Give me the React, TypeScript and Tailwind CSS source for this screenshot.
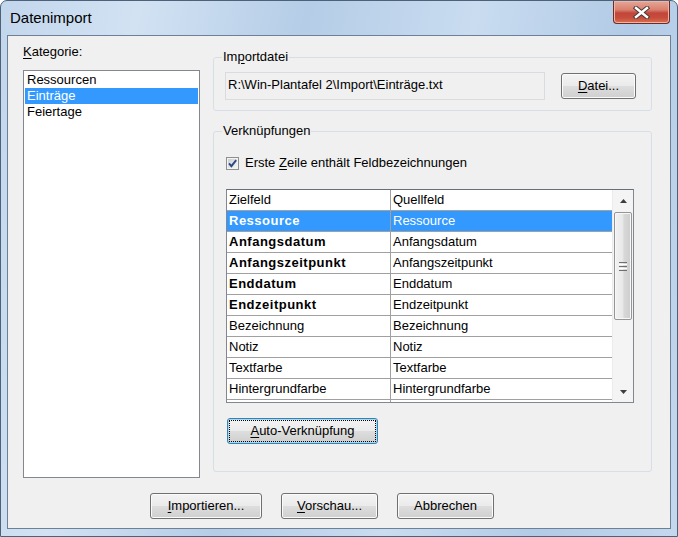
const rows = [
  { ziel: "Ressource", quelle: "Ressource", bold: true, selected: true },
  { ziel: "Anfangsdatum", quelle: "Anfangsdatum", bold: true },
  { ziel: "Anfangszeitpunkt", quelle: "Anfangszeitpunkt", bold: true },
  { ziel: "Enddatum", quelle: "Enddatum", bold: true },
  { ziel: "Endzeitpunkt", quelle: "Endzeitpunkt", bold: true },
  { ziel: "Bezeichnung", quelle: "Bezeichnung" },
  { ziel: "Notiz", quelle: "Notiz" },
  { ziel: "Textfarbe", quelle: "Textfarbe" },
  { ziel: "Hintergrundfarbe", quelle: "Hintergrundfarbe" },
  { ziel: "", quelle: "" },
];

const categories = ["Ressourcen", "Einträge", "Feiertage"];

function Button({
  children,
  className = "",
  focused = false,
}: {
  children: React.ReactNode;
  className?: string;
  focused?: boolean;
}) {
  return (
    <button
      type="button"
      className={
        "relative flex h-[26px] shrink-0 items-center justify-center rounded-[3px] border text-[13px] leading-[16px] text-black bg-[linear-gradient(180deg,#f3f3f3_0%,#ebebeb_48%,#dddddd_52%,#cfcfcf_100%)] " +
        (focused
          ? "border-[#3c7fb1] shadow-[inset_0_0_0_1px_#9edcf4] "
          : "border-[#707070] shadow-[inset_0_0_0_1px_#fbfbfb] ") +
        className
      }
    >
      {focused && <span className="absolute inset-[1px] border border-dotted border-black" />}
      <span className="relative">{children}</span>
    </button>
  );
}

function Mn({ children }: { children: React.ReactNode }) {
  return <span className="underline underline-offset-[2px]">{children}</span>;
}

function CheckBox() {
  return (
    <svg width="13" height="13" viewBox="0 0 13 13" className="shrink-0">
      <defs>
        <linearGradient id="cbg" x1="0" y1="0" x2="1" y2="1">
          <stop offset="0" stopColor="#cbcfd5" />
          <stop offset="1" stopColor="#f6f6f6" />
        </linearGradient>
      </defs>
      <rect x="0.5" y="0.5" width="12" height="12" fill="#f4f4f4" stroke="#8e8f8f" />
      <rect x="2" y="2" width="9" height="9" fill="url(#cbg)" />
      <path d="M3 6.3 L5.4 9.2 L10.2 3.2" stroke="#2b4b80" strokeWidth="1.9" fill="none" />
    </svg>
  );
}

function ScrollBar() {
  return (
    <div className="flex w-[21px] shrink-0 flex-col bg-[#f4f4f4] border-l border-[#ececec]">
      <div className="flex h-[22px] items-center justify-center">
        <svg width="7" height="4" viewBox="0 0 7 4">
          <polygon points="0,4 7,4 3.5,0" fill="#3d3d3d" />
        </svg>
      </div>
      <div className="mx-[1px] flex h-[108px] items-center justify-center rounded-[2px] border border-[#959595] bg-[linear-gradient(90deg,#f2f2f2_0%,#e8e8e8_50%,#d8d8d8_55%,#cdcdcd_100%)] shadow-[inset_0_0_0_1px_#f8f8f8]">
        <div className="flex flex-col gap-[1px]">
          <div className="h-[1px] w-[8px] bg-[#6f6f6f]" />
          <div className="h-[1px] w-[8px] bg-[#ffffff]" />
          <div className="h-[1px] w-[8px] bg-[#6f6f6f]" />
          <div className="h-[1px] w-[8px] bg-[#ffffff]" />
          <div className="h-[1px] w-[8px] bg-[#6f6f6f]" />
        </div>
      </div>
      <div className="flex-1" />
      <div className="flex h-[21px] items-center justify-center">
        <svg width="7" height="4" viewBox="0 0 7 4">
          <polygon points="0,0 7,0 3.5,4" fill="#3d3d3d" />
        </svg>
      </div>
    </div>
  );
}

export default function App() {
  return (
    <div className="flex h-[537px] w-[678px] flex-col overflow-hidden rounded-t-[7px] border border-[#4d6279] bg-[linear-gradient(100deg,#c2d6ec_0%,#d2e2f3_18%,#b5cde7_40%,#c9dcf0_62%,#b2cbe6_82%,#c4d8ee_100%)] font-['Liberation_Sans',Arial,sans-serif] text-black">
      {/* title bar */}
      <div className="flex h-[34px] shrink-0 items-start justify-between">
        <div className="pl-[9px] pt-[8px] text-[15px] leading-[18px]">Datenimport</div>
        <div className="mr-[7px] flex h-[23px] w-[57px] items-center justify-center rounded-b-[4px] border border-t-0 border-[#6e2c24] bg-[linear-gradient(180deg,#e7a698_0%,#d9806e_40%,#c2453a_55%,#c64c3c_75%,#d9704f_100%)] shadow-[inset_0_0_0_1px_#eeb4a6]">
          <svg width="17" height="13" viewBox="0 0 17 13">
            <path d="M3 2 L14 11 M14 2 L3 11" stroke="#4a3a38" strokeWidth="4.4" strokeLinecap="square" />
            <path d="M3 2 L14 11 M14 2 L3 11" stroke="#ffffff" strokeWidth="2.4" strokeLinecap="square" />
          </svg>
        </div>
      </div>

      {/* client area */}
      <div className="mx-[6px] flex h-[494px] shrink-0 flex-col border border-[#6e8096] bg-[#f0f0f0] text-[13px] leading-[16px]">
        <div className="flex pl-[15px]">
          {/* left column */}
          <div className="flex w-[177px] flex-col">
            <div className="mt-[8px]">
              <Mn>K</Mn>ategorie:
            </div>
            <div className="mt-[10px] flex h-[408px] flex-col border border-[#828790] bg-white px-[1px] pt-[1px]">
              {categories.map((c) => (
                <div
                  key={c}
                  className={
                    "h-[16px] pl-[2px] " + (c === "Einträge" ? "bg-[#3399ff] text-white" : "")
                  }
                >
                  {c}
                </div>
              ))}
            </div>
          </div>

          {/* right column */}
          <div className="ml-[13px] flex w-[439px] flex-col">
            <fieldset className="mt-[13px] w-[439px] rounded-[3px] border border-[#d5dfe5]">
              <legend className="ml-[8px] px-[1px]">
                Im<Mn>p</Mn>ortdatei
              </legend>
              <div className="flex items-start pl-[11px] pt-[7px] pb-[10px]">
                <div className="h-[28px] w-[320px] border border-[#dadbe0] pl-[2px] pt-[4px]">
                  R:\Win-Plantafel 2\Import\Einträge.txt
                </div>
                <Button className="ml-[16px] mt-[1px] w-[75px]">
                  <Mn>D</Mn>atei...
                </Button>
              </div>
            </fieldset>

            <fieldset className="mt-[12px] w-[439px] rounded-[3px] border border-[#d5dfe5]">
              <legend className="ml-[8px] px-[1px]">Verknüpfungen</legend>
              <div className="flex flex-col pl-[12px] pt-[16px] pb-[27px]">
                <div className="flex h-[16px] items-center gap-[6px]">
                  <CheckBox />
                  <span>
                    Erste <Mn>Z</Mn>eile enthält Feldbezeichnungen
                  </span>
                </div>

                <div className="mt-[18px] flex h-[214px] w-[408px] border border-[#828790] border-t-[#6a6e75] bg-white">
                  <div className="flex w-[385px] flex-col overflow-hidden">
                    <div className="flex h-[21px] shrink-0 border-b border-[#a0a0a0]">
                      <div className="w-[164px] border-r border-[#a0a0a0] pl-[2px] leading-[20px]">Zielfeld</div>
                      <div className="w-[221px] pl-[2px] leading-[20px]">Quellfeld</div>
                    </div>
                    {rows.map((r, i) => (
                      <div
                        key={i}
                        className={
                          "flex h-[21px] shrink-0 border-b border-[#a0a0a0] " +
                          (r.selected ? "bg-[#3399ff] text-white" : "")
                        }
                      >
                        <div
                          className={
                            "w-[164px] border-r border-[#a0a0a0] pl-[2px] leading-[20px] " +
                            (r.bold ? "font-bold tracking-[0.5px]" : "")
                          }
                        >
                          {r.ziel}
                        </div>
                        <div className="w-[221px] pl-[2px] leading-[20px]">{r.quelle}</div>
                      </div>
                    ))}
                  </div>
                  <ScrollBar />
                </div>

                <Button focused className="ml-[1px] mt-[15px] w-[151px]">
                  <Mn>A</Mn>uto-Verknüpfung
                </Button>
              </div>
            </fieldset>
          </div>
        </div>

        {/* bottom buttons */}
        <div className="mt-[15px] flex gap-[19px] pl-[142px]">
          <Button className="w-[112px]">
            <Mn>I</Mn>mportieren...
          </Button>
          <Button className="w-[97px]">
            <Mn>V</Mn>orschau...
          </Button>
          <Button className="w-[97px]">Abbrechen</Button>
        </div>
      </div>
    </div>
  );
}
